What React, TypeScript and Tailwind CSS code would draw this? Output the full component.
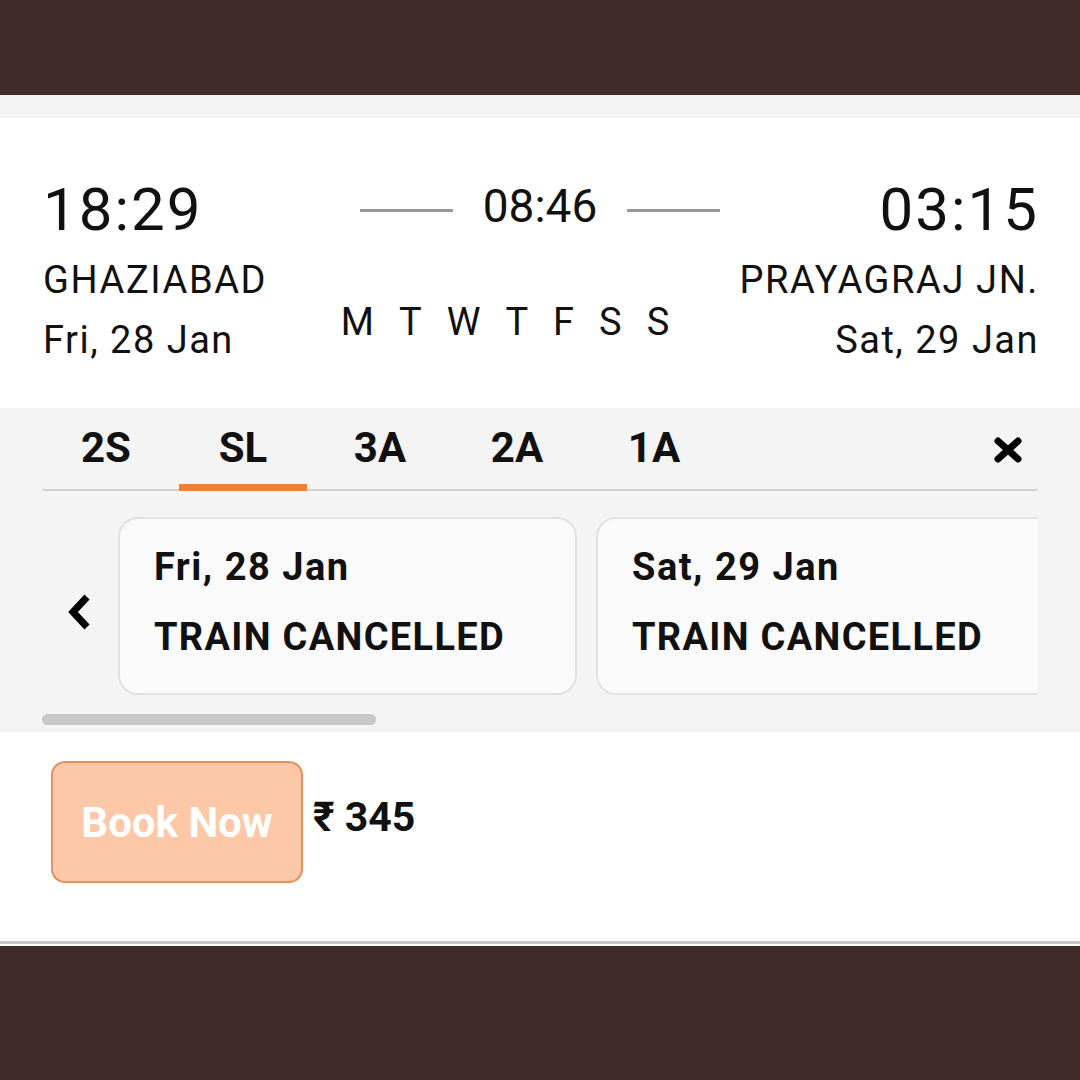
const tabs = ['2S', 'SL', '3A', '2A', '1A'];
const days = ['M', 'T', 'W', 'T', 'F', 'S', 'S'];

const cards = [
  { date: 'Fri, 28 Jan', status: 'TRAIN CANCELLED' },
  { date: 'Sat, 29 Jan', status: 'TRAIN CANCELLED' },
];

const App = () => {
  return (
    <div className="w-[1080px] h-[1080px] flex flex-col bg-[#402b2a] font-['Roboto',sans-serif] text-[#111]">
      <div className="h-[95px] shrink-0" />
      <div className="h-[23px] shrink-0 bg-[#f4f4f4]" />

      {/* journey summary */}
      <div className="h-[290px] shrink-0 bg-white px-[43px] pt-[52px] grid grid-cols-[1fr_auto_1fr]">
        <div className="flex flex-col items-start">
          <div className="text-[60px] leading-[80px] tracking-[2px]">18:29</div>
          <div className="text-[38px] leading-[44px] mt-[8px] tracking-[1.6px]">GHAZIABAD</div>
          <div className="text-[38px] leading-[44px] mt-[16px] tracking-[1.5px]">Fri, 28 Jan</div>
        </div>
        <div className="flex flex-col items-center pt-[3px]">
          <div className="flex items-center gap-[30px]">
            <div className="w-[93px] h-[3px] bg-[#999] mt-[9px]" />
            <div className="text-[46px] leading-[66px]">08:46</div>
            <div className="w-[93px] h-[3px] bg-[#999] mt-[9px]" />
          </div>
          <div className="flex gap-[25px] text-[38px] leading-[44px] mt-[61px] mr-[70px]">
            {days.map((d, i) => (
              <span key={i}>{d}</span>
            ))}
          </div>
        </div>
        <div className="flex flex-col items-end">
          <div className="text-[60px] leading-[80px] tracking-[2px] mr-[-2px]">03:15</div>
          <div className="text-[38px] leading-[44px] mt-[8px] tracking-[1.6px] mr-[-2px]">PRAYAGRAJ JN.</div>
          <div className="text-[38px] leading-[44px] mt-[16px] tracking-[1.5px] mr-[-2px]">Sat, 29 Jan</div>
        </div>
      </div>

      {/* classes + availability */}
      <div className="h-[324px] shrink-0 bg-[#f4f4f4] px-[42px] flex flex-col">
        <div className="flex items-stretch h-[83px] border-b-2 border-[#d2d2d2] rounded-b-[3px]">
          <div className="flex gap-[9px]">
            {tabs.map((t) => (
              <div
                key={t}
                className={`w-[128px] flex items-center justify-center font-bold text-[42px] border-b-[7px] mb-[-2px] pt-[3px] ${
                  t === 'SL' ? 'border-[#ec7f3a]' : 'border-transparent'
                }`}
              >
                {t}
              </div>
            ))}
          </div>
          <div className="ml-auto flex items-center pr-[15px] pt-[3px]">
            <svg width="30" height="26" viewBox="0 0 30 26">
              <path d="M5 4 L25 22 M25 4 L5 22" stroke="#000" strokeWidth="7" strokeLinecap="round" />
            </svg>
          </div>
        </div>

        <div className="flex items-center mt-[26px] overflow-hidden">
          <div className="w-[76px] shrink-0 flex justify-start pl-[24px] pt-[12px]">
            <svg width="28" height="40" viewBox="0 0 28 40">
              <path d="M21 5 L7 20 L21 35" stroke="#000" strokeWidth="7" fill="none" strokeLinejoin="miter" />
            </svg>
          </div>
          <div className="flex gap-[19px]">
            {cards.map((c) => (
              <div
                key={c.date}
                className="w-[459px] h-[178px] shrink-0 rounded-[20px] border-2 border-[#e2e2e2] bg-[#fafafa] pl-[34px] pt-[26px] flex flex-col"
              >
                <div className="font-bold text-[38px] leading-[44px] tracking-[1.5px]">{c.date}</div>
                <div className="font-bold text-[38px] leading-[44px] mt-[26px] tracking-[1.3px]">{c.status}</div>
              </div>
            ))}
          </div>
        </div>

        <div className="mt-[19px] w-[334px] h-[11px] rounded-full bg-[#c8c8c8]" />
      </div>

      {/* footer */}
      <div className="h-[209px] shrink-0 bg-white px-[51px] pt-[29px] flex items-start">
        <button className="w-[252px] h-[122px] rounded-[14px] bg-[#fcc8a8] border-2 border-[#e39160] text-white font-bold text-[42px]">
          Book Now
        </button>
        <div className="ml-[10px] mt-[32px] font-bold text-[41px] leading-[48px]">₹ 345</div>
      </div>
      <div className="h-[3px] shrink-0 bg-[#c8c8c8]" />
      <div className="h-[2px] shrink-0 bg-white" />
      <div className="flex-1" />
    </div>
  );
};

export default App;
